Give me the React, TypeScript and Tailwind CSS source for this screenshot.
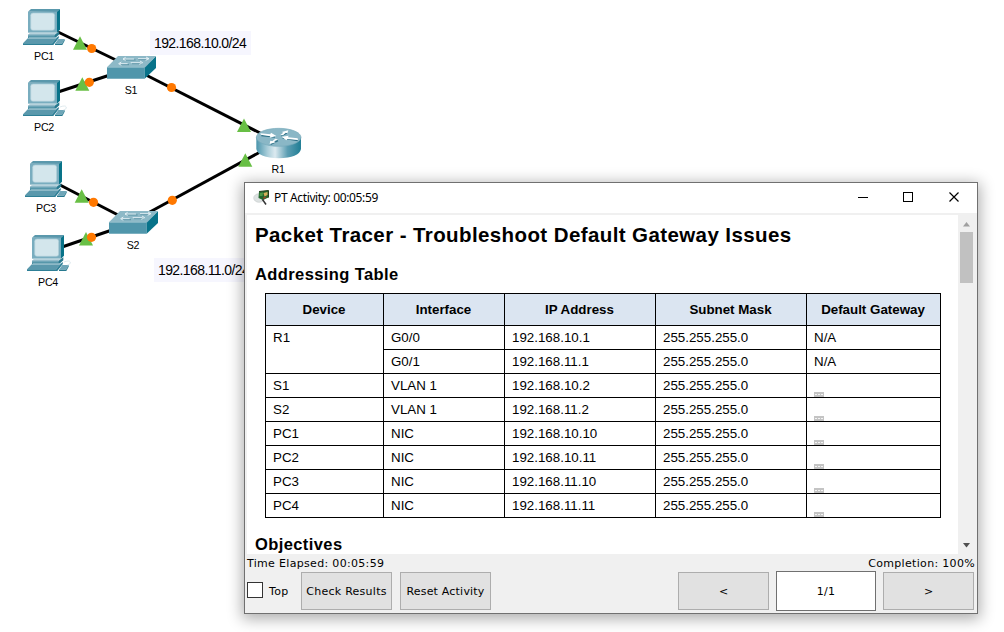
import React from "react";
import { clsx } from "clsx";

type Point = { x: number; y: number };

const pcs: (Point & { mouseCord?: boolean })[] = [
  { x: 10, y: 0 },
  { x: 10, y: 71, mouseCord: true },
  { x: 12, y: 152 },
  { x: 14, y: 226, mouseCord: true },
];

const switches: Point[] = [
  { x: 10, y: 0 },
  { x: 12, y: 155 },
];

const links = [
  [58, 32, 118, 61],
  [58, 92, 110, 75],
  [60, 185, 120, 216],
  [62, 247, 112, 230],
  [146, 75, 262, 134],
  [148, 213, 262, 151],
];

const upMarkers: Point[] = [
  { x: 80, y: 36.3 },
  { x: 82.3, y: 77.3 },
  { x: 81.7, y: 189.3 },
  { x: 86, y: 232 },
  { x: 244, y: 118.5 },
  { x: 245.3, y: 153.3 },
];

const dots: Point[] = [
  { x: 91.7, y: 48.5 },
  { x: 89.3, y: 82.3 },
  { x: 93.5, y: 202.3 },
  { x: 91.5, y: 237.3 },
  { x: 171.5, y: 87.5 },
  { x: 172.3, y: 200.3 },
];

function Pc({ x, y, mouseCord }: Point & { mouseCord?: boolean }) {
  return (
    <g transform={`translate(${x} ${y}) scale(0.3333)`}>
      <path d="M54 35 63 27H150L140 36Z" fill="#5a98ac" />
      <path d="M140 36 150 27V89L140 99Z" fill="#087389" />
      <rect x="54" y="35" width="87" height="63" fill="#79adbf" />
      <rect x="62" y="39" width="72" height="52" rx="7" fill="#d3e6ec" stroke="#a9cbd6" strokeWidth="2" />
      <path d="M60 98H142L132 105H54Z" fill="#b7d2dc" />
      <path d="M54 104H134L148 94V103L135 115H54Z" fill="#27798f" />
      <path d="M54 105H134V110H54Z" fill="#6fa6b8" />
      <path d="M50 118 57 112H148L136 125Z" fill="#9fc4d0" />
      <path d="M39 130 52 116H139L127 130Z" fill="#5a98ac" />
      <path d="M127 130 146 107V114L130 135H39V130Z" fill="#2e7f96" />
      <path d="M135 131 145 117H164L156 131Z" fill="#6fa6b8" />
      <path d="M135 131H156L164 117V122L157 135H135Z" fill="#27798f" />
      {mouseCord && <path d="M150 108Q166 102 169 108Q171 115 160 117" fill="none" stroke="#cfe0e6" strokeWidth="2" />}
    </g>
  );
}

function Switch({ x, y }: Point) {
  return (
    <g transform={`translate(${x} ${y}) scale(0.3333)`}>
      <path d="M291 202 324 168H438L404 204Z" fill="#8db9c7" />
      <path d="M291 201H404V236H291Z" fill="#5096ab" />
      <path d="M404 203 438 169V204L404 236Z" fill="#08738a" />
      <path d="M291 202H404" stroke="#aacdd8" strokeWidth="2" />
      <g stroke="#3d7c90" strokeWidth="2" fill="none">
        <path d="M343 180H377M385 179H409M331 194H357M366 191H396" />
      </g>
      <g stroke="#f4fafc" strokeWidth="2.4" fill="none">
        <path d="M340 177H372M384 176H416M329 191H353M362 188H392" />
        <path d="M347 172 339 177 347 182M408 171 417 176 407 181M334 186 326 191 334 196M390 183 398 188 388 193" />
      </g>
    </g>
  );
}

function Router() {
  return (
    <g transform="translate(140 20) scale(0.3333)">
      <path d="M349 352V387Q355 414 416 415Q477 414 483 387V352Z" fill="url(#routerBody)" />
      <ellipse cx="416" cy="352" rx="67" ry="27" fill="#8ab7c6" stroke="#75a9ba" strokeWidth="2" />
      <g fill="none" stroke="#2f7187" strokeWidth="4">
        <path d="M364 347 405 351M424 348 441 339M428 354 473 362M392 373 414 362" />
      </g>
      <g fill="#fff">
        <path d="M361 340 391 343 393 338 409 348 389 353 391 349 363 344Z" />
        <path d="M421 345 430 338 425 336 445 331 442 340 437 338 429 346Z" />
        <path d="M474 360 442 357 439 361 425 350 446 347 444 352 473 355Z" />
        <path d="M414 358 402 364 407 367 389 372 391 362 397 364 406 356Z" />
      </g>
    </g>
  );
}

function Topology() {
  return (
    <svg className="absolute inset-0" width="330" height="300" viewBox="0 0 330 300">
      <defs>
        <linearGradient id="routerBody">
          <stop offset="0" stopColor="#4a95ac" />
          <stop offset="0.25" stopColor="#a9cdd9" />
          <stop offset="0.42" stopColor="#dceaf0" />
          <stop offset="0.7" stopColor="#5b9db2" />
          <stop offset="1" stopColor="#1f7d94" />
        </linearGradient>
      </defs>
      {links.map(([x1, y1, x2, y2], i) => (
        <line key={i} x1={x1} y1={y1} x2={x2} y2={y2} stroke="#000" strokeWidth="3" />
      ))}
      {upMarkers.map((p, i) => (
        <path key={i} d={`M${p.x} ${p.y}l7 13.5h-14z`} fill="#68bf45" />
      ))}
      {dots.map((p, i) => (
        <circle key={i} cx={p.x} cy={p.y} r="4.6" fill="#ff7800" />
      ))}
      {pcs.map((p, i) => (
        <Pc key={i} {...p} />
      ))}
      {switches.map((p, i) => (
        <Switch key={i} {...p} />
      ))}
      <Router />
    </svg>
  );
}

function NodeLabel({ className, children }: { className: string; children: React.ReactNode }) {
  return (
    <span className={clsx("absolute w-10 text-center text-[10.67px] leading-3 tracking-[-0.3px]", className)}>
      {children}
    </span>
  );
}

function NetLabel({ className, children }: { className: string; children: React.ReactNode }) {
  return (
    <span
      className={clsx(
        "absolute h-6 w-[101px] bg-[#f6f6fe] pl-[4px] text-[14px] leading-6 tracking-[-0.6px] whitespace-nowrap",
        className,
      )}
    >
      {children}
    </span>
  );
}

const rows = [
  ["S1", "VLAN 1", "192.168.10.2"],
  ["S2", "VLAN 1", "192.168.11.2"],
  ["PC1", "NIC", "192.168.10.10"],
  ["PC2", "NIC", "192.168.10.11"],
  ["PC3", "NIC", "192.168.11.10"],
  ["PC4", "NIC", "192.168.11.11"],
];

function Cell({ className, children }: { className?: string; children?: React.ReactNode }) {
  return <div className={clsx("border-r border-b border-black pl-[7px] leading-[23px]", className)}>{children}</div>;
}

function BlankMark() {
  return (
    <svg className="mt-[18px]" width="10" height="5" viewBox="0 0 10 5">
      <rect width="10" height="5" fill="#c4c4c4" />
      <path d="M1 2.5h2M4 2.5h2M7 2.5h2" stroke="#f4f4f4" />
    </svg>
  );
}

function AddressTable() {
  return (
    <div className="ml-[18px] grid w-[676px] grid-cols-[118px_121px_151px_151px_134px] grid-rows-[32px] auto-rows-[24px] border-t border-l border-black text-[13.33px]">
      {["Device", "Interface", "IP Address", "Subnet Mask", "Default Gateway"].map((h) => (
        <div key={h} className="border-r border-b border-black bg-[#dbe5f1] pr-px text-center font-bold leading-[31px]">
          {h}
        </div>
      ))}
      <Cell className="row-span-2">R1</Cell>
      <Cell>G0/0</Cell>
      <Cell>192.168.10.1</Cell>
      <Cell>255.255.255.0</Cell>
      <Cell>N/A</Cell>
      <Cell>G0/1</Cell>
      <Cell>192.168.11.1</Cell>
      <Cell>255.255.255.0</Cell>
      <Cell>N/A</Cell>
      {rows.map(([device, iface, ip]) => (
        <React.Fragment key={device}>
          <Cell>{device}</Cell>
          <Cell>{iface}</Cell>
          <Cell>{ip}</Cell>
          <Cell>255.255.255.0</Cell>
          <Cell>
            <BlankMark />
          </Cell>
        </React.Fragment>
      ))}
    </div>
  );
}

function AppIcon() {
  return (
    <svg width="18" height="18" viewBox="0 0 18 18">
      <ellipse cx="6" cy="9" rx="5.3" ry="4.3" fill="#dde2e2" stroke="#c5caca" strokeWidth="0.6" />
      <path d="M6 2.5 15.5 1.5 15.5 8.5 10 11 5.5 9Z" fill="#24682f" />
      <path d="M6 2.5 15.5 1.5V8.5" fill="none" stroke="#263d1a" />
      <path d="M7 4 10 3.5 9.5 7 6.5 7Z" fill="#4f9a48" />
      <path d="M10.5 4 14.5 3V6L11.5 7.5Z" fill="#d8b05a" />
      <path d="M10 8.5 14 7.5 11 10Z" fill="#b33a22" />
      <path d="M9.5 10.5 13 15.5" stroke="#333" strokeWidth="1.5" />
    </svg>
  );
}

function PushButton({ children }: { children: React.ReactNode }) {
  return (
    <button className="flex h-[38px] w-[91px] items-center justify-center border border-[#adadad] bg-[#e1e1e1] pt-0.5 whitespace-nowrap">
      {children}
    </button>
  );
}

function ActivityWindow() {
  return (
    <section className="absolute top-[182px] left-[244px] flex h-[432px] w-[734px] flex-col border border-[#707070] bg-[#f0f0f0] shadow-[0_3px_14px_2px_rgba(0,0,0,0.32)]">
      <header className="flex h-[30px] shrink-0 items-center bg-white pl-2 font-['Noto_Sans',sans-serif]">
        <AppIcon />
        <h1 className="ml-[3px] text-[12px] tracking-[-0.36px]">PT Activity: 00:05:59</h1>
        <div className="ml-auto flex items-center pr-[17px]">
          <svg width="102" height="12" viewBox="0 0 102 12" fill="none" stroke="#000">
            <path d="M0 5.5h10" />
            <rect x="45.5" y="0.5" width="9" height="9" />
            <path d="m91.5 0.5 9 9m0-9-9 9" strokeWidth="1.2" />
          </svg>
        </div>
      </header>

      <div className="mt-0.5 ml-0.5 flex h-[339px] shrink-0">
        <article className="w-[711px] overflow-hidden bg-white">
          <h2 className="h-[40px] pl-2 text-[20.5px] leading-[40px] font-bold tracking-[0.4px] whitespace-nowrap">
            Packet Tracer - Troubleshoot Default Gateway Issues
          </h2>
          <h3 className="h-[38px] pl-2 text-[16.5px] leading-[38px] font-bold tracking-[0.4px]">Addressing Table</h3>
          <AddressTable />
          <h3 className="mt-[15px] h-6 pl-2 text-[16.5px] leading-[22px] font-bold tracking-[0.4px]">Objectives</h3>
        </article>
        <div className="flex grow flex-col items-start pl-0.5">
          <svg className="mt-[7px] ml-[3px]" width="7" height="5" viewBox="0 0 7 5">
            <path d="M3.5 0 7 4.5H0Z" fill="#a0a0a0" />
          </svg>
          <div className="mt-[5px] h-[51px] w-[13px] bg-[#c1c1c1]" />
          <svg className="mt-auto mb-[6px] ml-[3px]" width="7" height="5" viewBox="0 0 7 5">
            <path d="M3.5 4.5 7 0H0Z" fill="#505050" />
          </svg>
        </div>
      </div>

      <footer className="flex grow flex-col px-0.5 font-['DejaVu_Sans',sans-serif] text-[11px]">
        <div className="flex h-[17px] justify-between leading-[19px] tracking-[0.32px]">
          <span>Time Elapsed: 00:05:59</span>
          <span>Completion: 100%</span>
        </div>
        <div className="flex h-10 items-center">
          <span className="mb-0.5 size-4 border border-[#333] bg-white" />
          <span className="ml-[6px] w-[32px] pt-0.5 tracking-[0.32px]">Top</span>
          <PushButton>
            <span className="tracking-[0.27px]">Check Results</span>
          </PushButton>
          <span className="w-2" />
          <PushButton>
            <span className="tracking-[0.2px]">Reset Activity</span>
          </PushButton>
          <div className="mr-px ml-auto flex items-center gap-[7px]">
            <PushButton>&lt;</PushButton>
            <div className="flex h-10 w-[100px] items-center justify-center border border-[#707070] bg-white pt-0.5 tracking-[0.3px]">
              1/1
            </div>
            <PushButton>&gt;</PushButton>
          </div>
        </div>
      </footer>
    </section>
  );
}

export default function App() {
  return (
    <main className="relative h-[632px] w-[1004px] overflow-hidden bg-white font-['Liberation_Sans',sans-serif] text-black">
      <NetLabel className="top-[31px] left-[150px]">192.168.10.0/24</NetLabel>
      <NetLabel className="top-[258px] left-[154px]">192.168.11.0/24</NetLabel>
      <Topology />
      <NodeLabel className="top-[50px] left-[24px]">PC1</NodeLabel>
      <NodeLabel className="top-[121px] left-[24px]">PC2</NodeLabel>
      <NodeLabel className="top-[202px] left-[26px]">PC3</NodeLabel>
      <NodeLabel className="top-[276px] left-[28px]">PC4</NodeLabel>
      <NodeLabel className="top-[84px] left-[111px]">S1</NodeLabel>
      <NodeLabel className="top-[239px] left-[113px]">S2</NodeLabel>
      <NodeLabel className="top-[163px] left-[258px]">R1</NodeLabel>
      <ActivityWindow />
    </main>
  );
}
